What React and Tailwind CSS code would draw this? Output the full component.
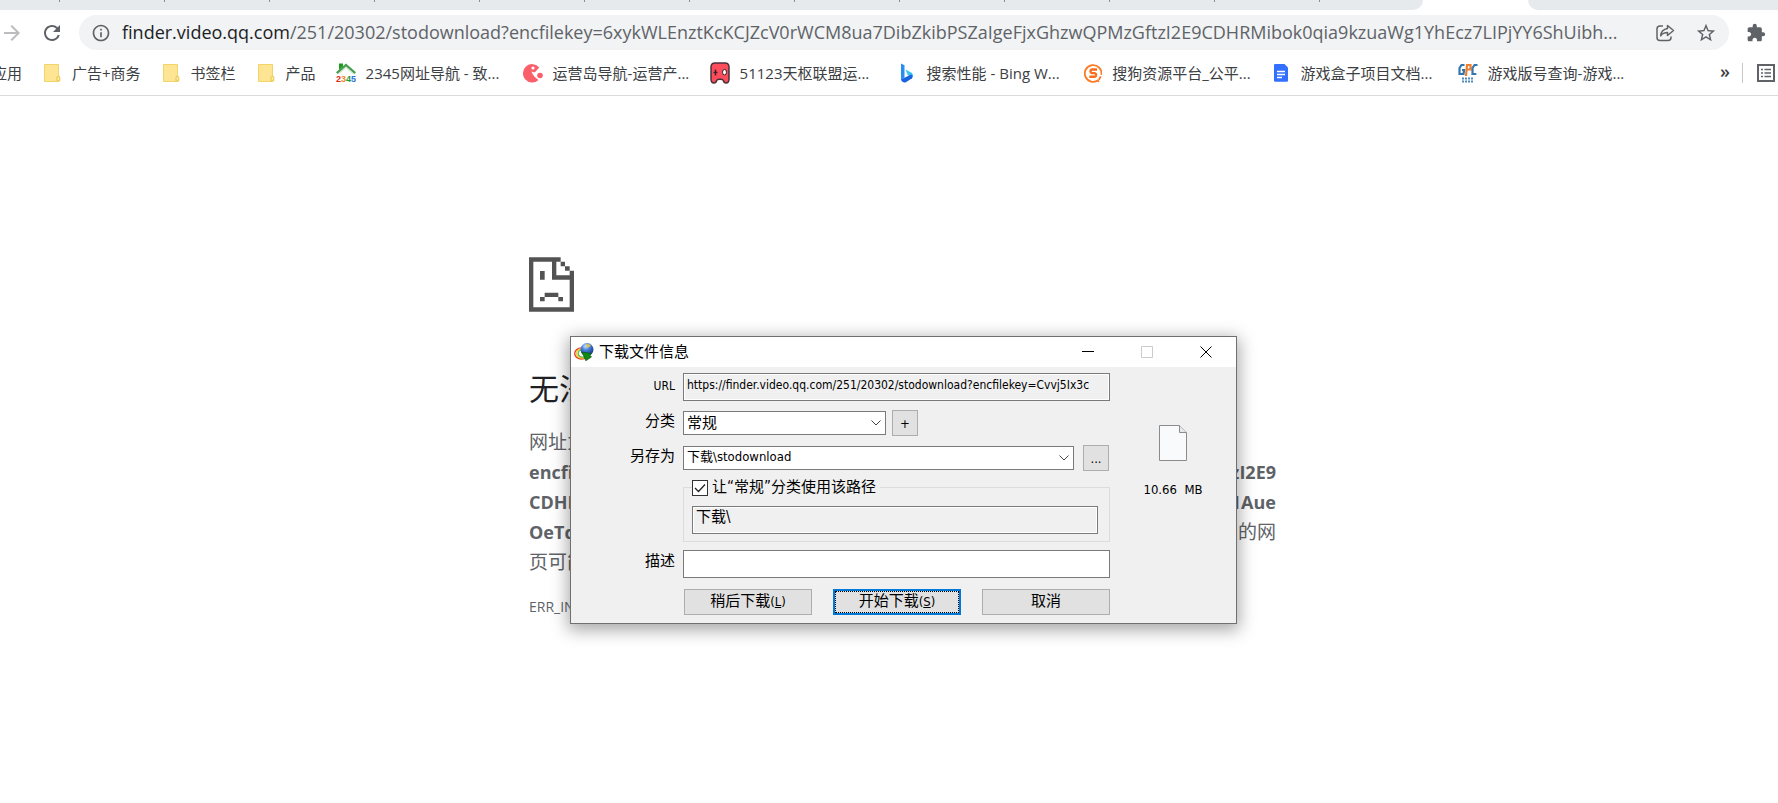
import { MdArrowForward, MdRefresh, MdInfoOutline, MdStarBorder, MdExtension } from "react-icons/md"

const FolderIcon = () => (
  <svg viewBox="0 0 20 20" className="w-5 h-5">
    <path d="M2.5 1.5h14v11.5l1 .8v4l-1.2.7H2.5z" fill="#fee594" stroke="#f2d468" />
    <path d="M15 18v-4.2l2-.6.8 1v3.6z" fill="#ffe9a3" stroke="#eac74f" />
  </svg>
)

const HouseIcon = () => (
  <svg viewBox="0 0 20 20" className="w-5 h-5">
    <path d="M3 .5h4v3L3 7z" fill="#1d9a1d" />
    <path d="M.8 10.2 10 2l9.2 8.2" fill="none" stroke="#4a9e4f" strokeWidth="2.4" />
    <path d="M2.5 11 10 4.4l7.5 6.6" fill="none" stroke="#d5e8d2" strokeWidth="1.2" />
    <g fontFamily="Liberation Sans" fontWeight="700" fontSize="9">
      <text x="0" y="19" fill="#e0261c">2</text>
      <text x="5" y="19" fill="#f08a1d">3</text>
      <text x="10" y="19" fill="#1c9b35">4</text>
      <text x="15" y="19" fill="#2a6fd6">5</text>
    </g>
  </svg>
)

const PacIcon = () => (
  <svg viewBox="0 0 20 20" className="w-5 h-5">
    <path d="M16.3 4.5A9.2 9.2 0 1 0 15.5 17l-4.2-3.6a2.4 2.4 0 0 1-.3-3.2z" fill="#f9606a" />
    <circle cx="10" cy="5" r="1.6" fill="#fff" />
    <path d="m8.5 8.5 6.5 2-5 1.5z" fill="#fff" />
    <circle cx="17" cy="12.5" r="2.8" fill="#f9606a" />
  </svg>
)

const GamepadIcon = () => (
  <svg viewBox="0 0 20 22" className="w-5 h-[22px]">
    <path
      d="M5 1h10c3 0 4 2 4 4v12c0 2-1 4-3 4s-2.500-1.500-3-3c-.5-1-5.500-1-6 0-.5 1.500-1 3-3 3s-3-2-3-4V5c0-2 1-4 4-4z"
      fill="#fb4d5c"
      stroke="#4a3138"
      strokeWidth="1.500"
    />
    <path d="M5.500 7.500v6M3.500 10.500h4" stroke="#3a2228" strokeWidth="1.400" />
    <ellipse cx="14.500" cy="10.200" rx="2" ry="2.800" fill="#fff" stroke="#3a2228" />
  </svg>
)

const BingIcon = () => (
  <svg viewBox="0 0 20 20" className="w-5 h-5">
    <path d="m4 .5 3.500 1.700v12.300L4 17z" fill="#2a8df2" />
    <path d="m8.500 6.500 6.200 3.200c1.300 1 1.500 3 .8 4.300l-4.700-1.800z" fill="#38c6f0" />
    <path d="m4 16.500 10-5c2 .5 2 2.700 1 3.800L8.500 19.500C6.500 20 4.500 18.500 4 16.500z" fill="#1763e0" />
  </svg>
)

const SogouIcon = () => (
  <svg viewBox="0 0 20 20" className="w-5 h-5">
    <path d="M15.500 17.500A9 9 0 1 1 18.700 12" fill="none" stroke="#fb7a24" strokeWidth="2" />
    <path
      d="M14 6.200H8.500a2 2 0 0 0 0 3.900h3a2 2 0 0 1 0 3.900H5.700"
      fill="none"
      stroke="#fb6e1b"
      strokeWidth="2.600"
    />
    <path d="M18 13.500 16 17.500" stroke="#fb6e1b" strokeWidth="1.800" />
    <circle cx="15.500" cy="19" r="1" fill="#fb6e1b" />
  </svg>
)

const DocIcon = () => (
  <svg viewBox="0 0 20 20" className="w-5 h-5">
    <path d="M4 1h9.500L17 4.500V17.500A1.300 1.300 0 0 1 15.700 18.800H4.300A1.300 1.300 0 0 1 3 17.500V2a1 1 0 0 1 1-1z" fill="#3370ff" />
    <path d="M6 8.500h8M6 11.500h8M6 14.500h5" stroke="#fff" strokeWidth="1.300" />
  </svg>
)

const GpcIcon = () => (
  <svg viewBox="0 0 20 20" className="w-5 h-5">
    <g fill="none" strokeWidth="2.200">
      <path d="M6.500 2H3.500L1.500 5v6h4l.6-4H4" stroke="#3577ad" />
      <path d="M8 13 9 2h3.500v4.500H9" stroke="#ef7f2d" />
      <path d="M19.500 2h-3L14.500 5v6h3.800" stroke="#3577ad" />
    </g>
    <path d="M4 15.500h12M4 18.500h11" stroke="#4c8bbd" strokeWidth="2" strokeDasharray="2 1" />
  </svg>
)

const ShareIcon = () => (
  <svg viewBox="0 0 20 20" className="w-5 h-5" fill="none" stroke="#5f6368" strokeWidth="1.500">
    <path d="M8 3H5a3 3 0 0 0-3 3v8.500a3 3 0 0 0 3 3h8a3 3 0 0 0 3-3v-1" />
    <path d="M12.500 2.500 18.500 7.500l-6 5V9.600c-3 0-5 .7-6.800 3.200.4-4 2.800-6.700 6.800-7.300z" strokeLinejoin="round" />
  </svg>
)

const ReadingListIcon = () => (
  <svg viewBox="0 0 18 18" className="w-[18px] h-[18px]" fill="none" stroke="#5f6368">
    <rect x="1" y="1" width="16" height="16" strokeWidth="2" />
    <path d="M4 5.500h2M4 9h2M4 12.500h2M7.500 5.500H14M7.500 9H14M7.500 12.500H14" strokeWidth="1.500" />
  </svg>
)

const SadPageIcon = () => (
  <svg viewBox="0 0 135 163" className="w-[45px] h-[55px]" fill="#535353">
    <path d="M0 0h95v13H82v41h40V40h13v123H0zM13 13v137h109V67H69V13z" fillRule="evenodd" />
    <path d="M95 13h13v14H95zM108 27h14v13h-14zM33 41h14v26H33zM47 106h41v13H47zM33 119h14v13H33zM88 119h14v13H88z" />
  </svg>
)

const GlobeIcon = () => (
  <svg viewBox="0 0 20 18" className="w-5 h-[18px]">
    <defs>
      <radialGradient id="globe" cx="40%" cy="25%" r="75%">
        <stop offset="0" stopColor="#cfe4ff" />
        <stop offset="0.400" stopColor="#4a83dc" />
        <stop offset="1" stopColor="#12357f" />
      </radialGradient>
    </defs>
    <g fill="none">
      <ellipse cx="7.500" cy="10.500" rx="6.800" ry="5.500" stroke="#e8402a" strokeWidth="1.400" />
      <ellipse cx="8" cy="10.500" rx="5.600" ry="4.500" stroke="#f6d32d" strokeWidth="1.400" />
      <ellipse cx="8.500" cy="10.500" rx="4.400" ry="3.600" stroke="#4fb947" strokeWidth="1.200" />
    </g>
    <circle cx="13" cy="6.500" r="6.500" fill="url(#globe)" />
    <path d="M12 1.500c2-1 4 0 5 1.500l-2 1-1.500 1z" fill="#d8c35b" />
    <path d="m7.500 9 10 1.500-1.500 1.700 1.500 1.800-5.700 3.800-1.800-4.300z" fill="#118a14" stroke="#0a4d0c" strokeWidth=".6" />
  </svg>
)

const FileIcon = () => (
  <svg viewBox="0 0 28 36" className="w-7 h-9">
    <path d="M.5.5h20l7 7v28H.5z" fill="#f8fafb" stroke="#8c8c8c" />
    <path d="M20.500.5v7h7" fill="#e6e9ea" stroke="#8c8c8c" />
  </svg>
)

const folders = ["广告+商务", "书签栏", "产品"]

const bookmarks = [
  { title: "2345网址导航 - 致...", Icon: HouseIcon },
  { title: "运营岛导航-运营产...", Icon: PacIcon },
  { title: "51123天枢联盟运...", Icon: GamepadIcon },
  { title: "搜索性能 - Bing W...", Icon: BingIcon },
  { title: "搜狗资源平台_公平...", Icon: SogouIcon },
  { title: "游戏盒子项目文档...", Icon: DocIcon },
  { title: "游戏版号查询-游戏...", Icon: GpcIcon },
]

const TabStrip = () => (
  <div className="flex h-[10px] bg-white">
    <div className="flex w-[1423px] shrink-0 gap-[104px] overflow-hidden rounded-br-[10px] bg-[#e7eaed] pl-[59px]">
      {Array.from({ length: 13 }, (_, i) => (
        <span key={i} className="h-[2px] w-px shrink-0 bg-[#8a8d91]"></span>
      ))}
    </div>
    <div className="ml-[105px] flex-1 rounded-bl-[10px] bg-[#e7eaed]"></div>
  </div>
)

const Toolbar = () => (
  <div className="flex h-[45px] items-center pr-3">
    <button aria-label="前进" className="w-[22px] shrink-0">
      <MdArrowForward className="size-6 text-[#babcbe]" />
    </button>
    <button aria-label="重新加载" className="ml-[18px] shrink-0">
      <MdRefresh className="size-6 text-[#5f6368]" />
    </button>
    <div className="ml-[15px] flex h-[35px] min-w-0 flex-1 items-center rounded-full bg-[#f1f3f4] pl-3 pr-3">
      <MdInfoOutline className="size-5 shrink-0 text-[#5f6368]" />
      <p className="ml-[11px] min-w-0 flex-1 overflow-hidden whitespace-nowrap text-[18px] text-[#5f6368]">
        <span className="text-[#202124]">finder.video.qq.com</span>
        /251/20302/stodownload?encfilekey=6xykWLEnztKcKCJZcV0rWCM8ua7DibZkibPSZaIgeFjxGhzwQPMzGftzI2E9CDHRMibok0qia9kzuaWg1YhEcz7LIPjYY6ShUibh...
      </p>
      <button aria-label="分享" className="ml-5 shrink-0">
        <ShareIcon />
      </button>
      <button aria-label="收藏" className="ml-5 shrink-0">
        <MdStarBorder className="size-[22px] text-[#5f6368]" />
      </button>
    </div>
    <button aria-label="扩展程序" className="ml-[17px] shrink-0">
      <MdExtension className="size-5 text-[#5f6368]" />
    </button>
  </div>
)

const BookmarksBar = () => (
  <nav className="flex h-[41px] items-center gap-5 overflow-hidden border-b border-[#d9dbde] pb-1 pr-[3px] text-[15px] text-[#3c4043]">
    <a href="#" className="flex w-[22px] shrink-0 justify-end whitespace-nowrap">
      应用
    </a>
    {folders.map((title) => (
      <a key={title} href="#" className="flex shrink-0 items-center gap-[10px] whitespace-nowrap">
        <FolderIcon />
        {title}
      </a>
    ))}
    {bookmarks.map(({ title, Icon }) => (
      <a key={title} href="#" className="flex w-[167px] shrink-0 items-center gap-[10px] whitespace-nowrap">
        <Icon />
        {title}
      </a>
    ))}
    <div className="ml-auto flex shrink-0 items-center">
      <button aria-label="更多书签" className="pb-1 text-lg font-semibold leading-5">
        »
      </button>
      <span className="ml-3 mr-[14px] h-5 w-px bg-[#c6c8cb]"></span>
      <button aria-label="阅读清单">
        <ReadingListIcon />
      </button>
    </div>
  </nav>
)

const ErrorLine = ({ start, end }) => (
  <span className="flex justify-between">
    <span>{start}</span>
    <span>{end}</span>
  </span>
)

const ErrorPage = () => (
  <main className="ml-[529px] w-[747px] pt-[161px] text-[#5f6368]">
    <SadPageIcon />
    <h1 className="mt-[54px] text-[30px] leading-[45px] text-[#202124]">无法访问此网站</h1>
    <p className="mt-4 text-[19px] leading-[30px]">
      <ErrorLine start="网址为" />
      <strong className="text-[18px]">
        <ErrorLine start="encfilek" end="tzI2E9" />
        <ErrorLine start="CDHRM" end="1Aue" />
      </strong>
      <ErrorLine start={<strong className="text-[18px]">OeTq</strong>} end="的网" />
      页可能
    </p>
    <p className="mt-[18px] text-[14px] leading-6">ERR_INVALID_RESPONSE</p>
  </main>
)

const Select = ({ id, value, className }) => (
  <div className={`relative h-6 ${className}`}>
    <select
      id={id}
      defaultValue={value}
      className="block h-6 w-full appearance-none rounded-none border border-[#7a7a7a] bg-white pb-1 pl-[3px] outline-none"
    >
      <option>{value}</option>
    </select>
    <svg
      viewBox="0 0 10 6"
      className="pointer-events-none absolute right-[5px] top-[9px] h-[6px] w-[10px]"
      fill="none"
      stroke="#444"
    >
      <path d="m.5.5 4.500 4.500L9.500.5" />
    </svg>
  </div>
)

const Label = ({ htmlFor, children }) => (
  <label htmlFor={htmlFor} className="w-[104px] shrink-0 pb-1 text-right">
    {children}
  </label>
)

const readOnlyField =
  "block h-7 w-full border border-[#7a7a7a] bg-[#f0f0f0] pl-[3px] pr-px shadow-[inset_0_0_0_1px_#fff] outline-none"
const smallButton = "size-[26px] shrink-0 border border-[#adadad] bg-[#e1e1e1] text-[13px] leading-none"
const actionButton = "h-[26px] w-[128px] border border-[#adadad] bg-[#e1e1e1] pb-px leading-none"

const DownloadDialog = () => (
  <section
    role="dialog"
    aria-label="下载文件信息"
    className="absolute left-[570px] top-[336px] w-[667px] border border-[#707070] bg-[#f0f0f0] font-['DejaVu_Sans_Condensed','Noto_Sans_CJK_SC',sans-serif] text-[15px] text-black shadow-[0_4px_16px_2px_rgba(0,0,0,0.35)]"
  >
    <header className="flex h-[30px] items-center bg-white pl-[3px] pr-6">
      <GlobeIcon />
      <h2 className="ml-[5px] flex-1">下载文件信息</h2>
      <div className="flex items-center gap-[47px]">
        <button aria-label="最小化">
          <svg viewBox="0 0 12 12" className="size-3" stroke="#000">
            <path d="M0 5.500h12" />
          </svg>
        </button>
        <button aria-label="最大化" disabled>
          <svg viewBox="0 0 12 12" className="size-3" fill="none" stroke="#ccc">
            <path d="M.5.5h11v11H.5z" />
          </svg>
        </button>
        <button aria-label="关闭">
          <svg viewBox="0 0 12 12" className="size-3" stroke="#000">
            <path d="m.5.5 11 11M11.500.5l-11 11" />
          </svg>
        </button>
      </div>
    </header>

    <div className="flex">
      <form className="flex w-[539px] flex-col gap-2 pb-[5px] pt-[6px]" onSubmit={(e) => e.preventDefault()}>
        <div className="flex items-center gap-2">
          <Label htmlFor="url">
            <span className="text-[12px]">URL</span>
          </Label>
          <input
            id="url"
            readOnly
            className={`${readOnlyField} pb-1 text-[12px]`}
            defaultValue="https://finder.video.qq.com/251/20302/stodownload?encfilekey=Cvvj5Ix3c"
          />
        </div>

        <div className="flex h-7 items-center gap-2">
          <Label htmlFor="category">分类</Label>
          <Select id="category" value="常规" className="w-[203px] text-[15px]" />
          <button className={`${smallButton} -ml-[2px]`}>+</button>
        </div>

        <div className="flex items-center gap-2">
          <Label htmlFor="save-as">另存为</Label>
          <Select id="save-as" value={"下载\\stodownload"} className="flex-1 text-[13px]" />
          <button className={`${smallButton} mx-px`}>...</button>
        </div>

        <fieldset className="ml-[112px] border border-[#dcdcdc] pb-[7px] pl-2 pr-[11px]">
          <legend className="h-4 pr-1">
            <label className="flex h-4 items-center gap-1 whitespace-nowrap">
              <span className="relative size-4">
                <input
                  type="checkbox"
                  defaultChecked
                  className="peer block size-4 appearance-none border border-[#333] bg-white"
                />
                <svg
                  viewBox="0 0 16 16"
                  className="pointer-events-none absolute inset-0 hidden size-4 peer-checked:block"
                  fill="none"
                  stroke="#222"
                  strokeWidth="1.300"
                >
                  <path d="m3 8 3.500 3.500L13 4.500" />
                </svg>
              </span>
              让“常规”分类使用该路径
            </label>
          </legend>
          <input readOnly aria-label="路径" className={`${readOnlyField} mt-[10px] pb-2`} defaultValue={"下载\\"} />
        </fieldset>

        <div className="flex items-center gap-2">
          <Label htmlFor="description">描述</Label>
          <input
            id="description"
            className="block h-7 w-full border border-[#7a7a7a] bg-white px-1 outline-none"
          />
        </div>

        <div className="ml-[113px] flex h-8 items-center justify-between">
          <button className={actionButton}>
            稍后下载<span className="text-[13px]">(<u>L</u>)</span>
          </button>
          <button className="h-[26px] w-[128px] border-2 border-[#0078d7] bg-[#e1e1e1] pb-px leading-none outline-1 -outline-offset-3 outline-dotted outline-black">
            开始下载<span className="text-[13px]">(<u>S</u>)</span>
          </button>
          <button className={actionButton}>取消</button>
        </div>
      </form>

      <aside className="flex flex-1 flex-col items-center pt-[58px] text-[13px]">
        <FileIcon />
        <p className="mt-[19px] whitespace-pre">10.66  MB</p>
      </aside>
    </div>
  </section>
)

const App = () => {
  return (
    <div className="relative min-h-screen overflow-hidden bg-white font-['Open_Sans','Noto_Sans_CJK_SC',sans-serif]">
      <TabStrip />
      <Toolbar />
      <BookmarksBar />
      <ErrorPage />
      <DownloadDialog />
    </div>
  )
}

export default App
